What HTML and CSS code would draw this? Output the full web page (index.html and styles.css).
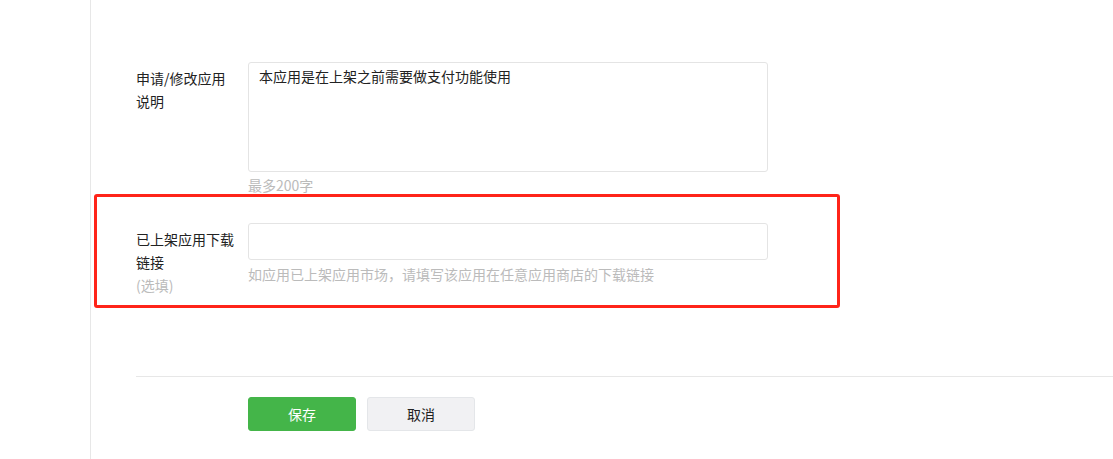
FILE: index.html
```html
<!DOCTYPE html>
<html lang="zh-CN">
<head>
<meta charset="utf-8">
<title>应用信息</title>
<link rel="stylesheet" href="styles.css">
</head>
<body>
<div class="page">
  <form class="form">
    <div class="row row-desc">
      <div class="label">申请/修改应用<br>说明</div>
      <div class="field">
        <div class="textarea">本应用是在上架之前需要做支付功能使用</div>
        <div class="tip">最多200字</div>
      </div>
    </div>
    <div class="row row-link">
      <div class="label">已上架应用下载<br>链接<br><span class="optional">(选填)</span></div>
      <div class="field">
        <div class="input"></div>
        <div class="tip tip-link">如应用已上架应用市场，请填写该应用在任意应用商店的下载链接</div>
      </div>
    </div>
    <div class="actions">
      <button type="button" class="btn btn-primary">保存</button>
      <button type="button" class="btn btn-default">取消</button>
    </div>
  </form>
</div>
</body>
</html>
```
FILE: styles.css
```css
html, body {
  margin: 0;
  padding: 0;
  background: #fff;
}
body {
  font-family: "Noto Sans CJK SC", "Microsoft YaHei", sans-serif;
  font-size: 14px;
  color: #222;
}
.page {
  margin-left: 90px;
  border-left: 1px solid #e7e7e7;
  min-height: 459px;
  box-sizing: border-box;
}
.form {
  padding-top: 62px;
  padding-left: 45px;
}
.row {
  display: flex;
  align-items: flex-start;
}
.label {
  width: 112px;
  flex: none;
  padding-top: 5px;
  line-height: 23px;
  color: #222;
}
.optional {
  color: #bbb;
}
.field {
  width: 520px;
}
.textarea {
  box-sizing: border-box;
  height: 110px;
  border: 1px solid #e4e4e4;
  border-radius: 3px;
  padding: 3px 10px;
  line-height: 20px;
}
.tip {
  color: #bbb;
  line-height: 20px;
  margin-top: 3px;
}
.row-link {
  position: relative;
  margin-top: 28px;
}
.row-link::before {
  content: "";
  position: absolute;
  left: -42px;
  top: -29px;
  width: 746px;
  height: 114px;
  box-sizing: border-box;
  border: 3px solid #ff2419;
  border-radius: 3px;
  pointer-events: none;
}
.input {
  box-sizing: border-box;
  height: 37px;
  border: 1px solid #e4e4e4;
  border-radius: 3px;
}
.tip-link {
  margin-top: 4px;
}
.actions {
  margin-top: 79px;
  border-top: 1px solid #e7e7e7;
  padding-top: 20px;
  padding-left: 112px;
  display: flex;
  gap: 11px;
}
.btn {
  box-sizing: border-box;
  width: 108px;
  height: 34px;
  border-radius: 3px;
  font-family: inherit;
  font-size: 14px;
  line-height: 30px;
  padding: 0 0 1px;
  cursor: pointer;
}
.btn-primary {
  background: #44b549;
  border: 1px solid #44b549;
  color: #fff;
}
.btn-default {
  background: #f1f1f3;
  border: 1px solid #e4e6e9;
  color: #222;
}
```
